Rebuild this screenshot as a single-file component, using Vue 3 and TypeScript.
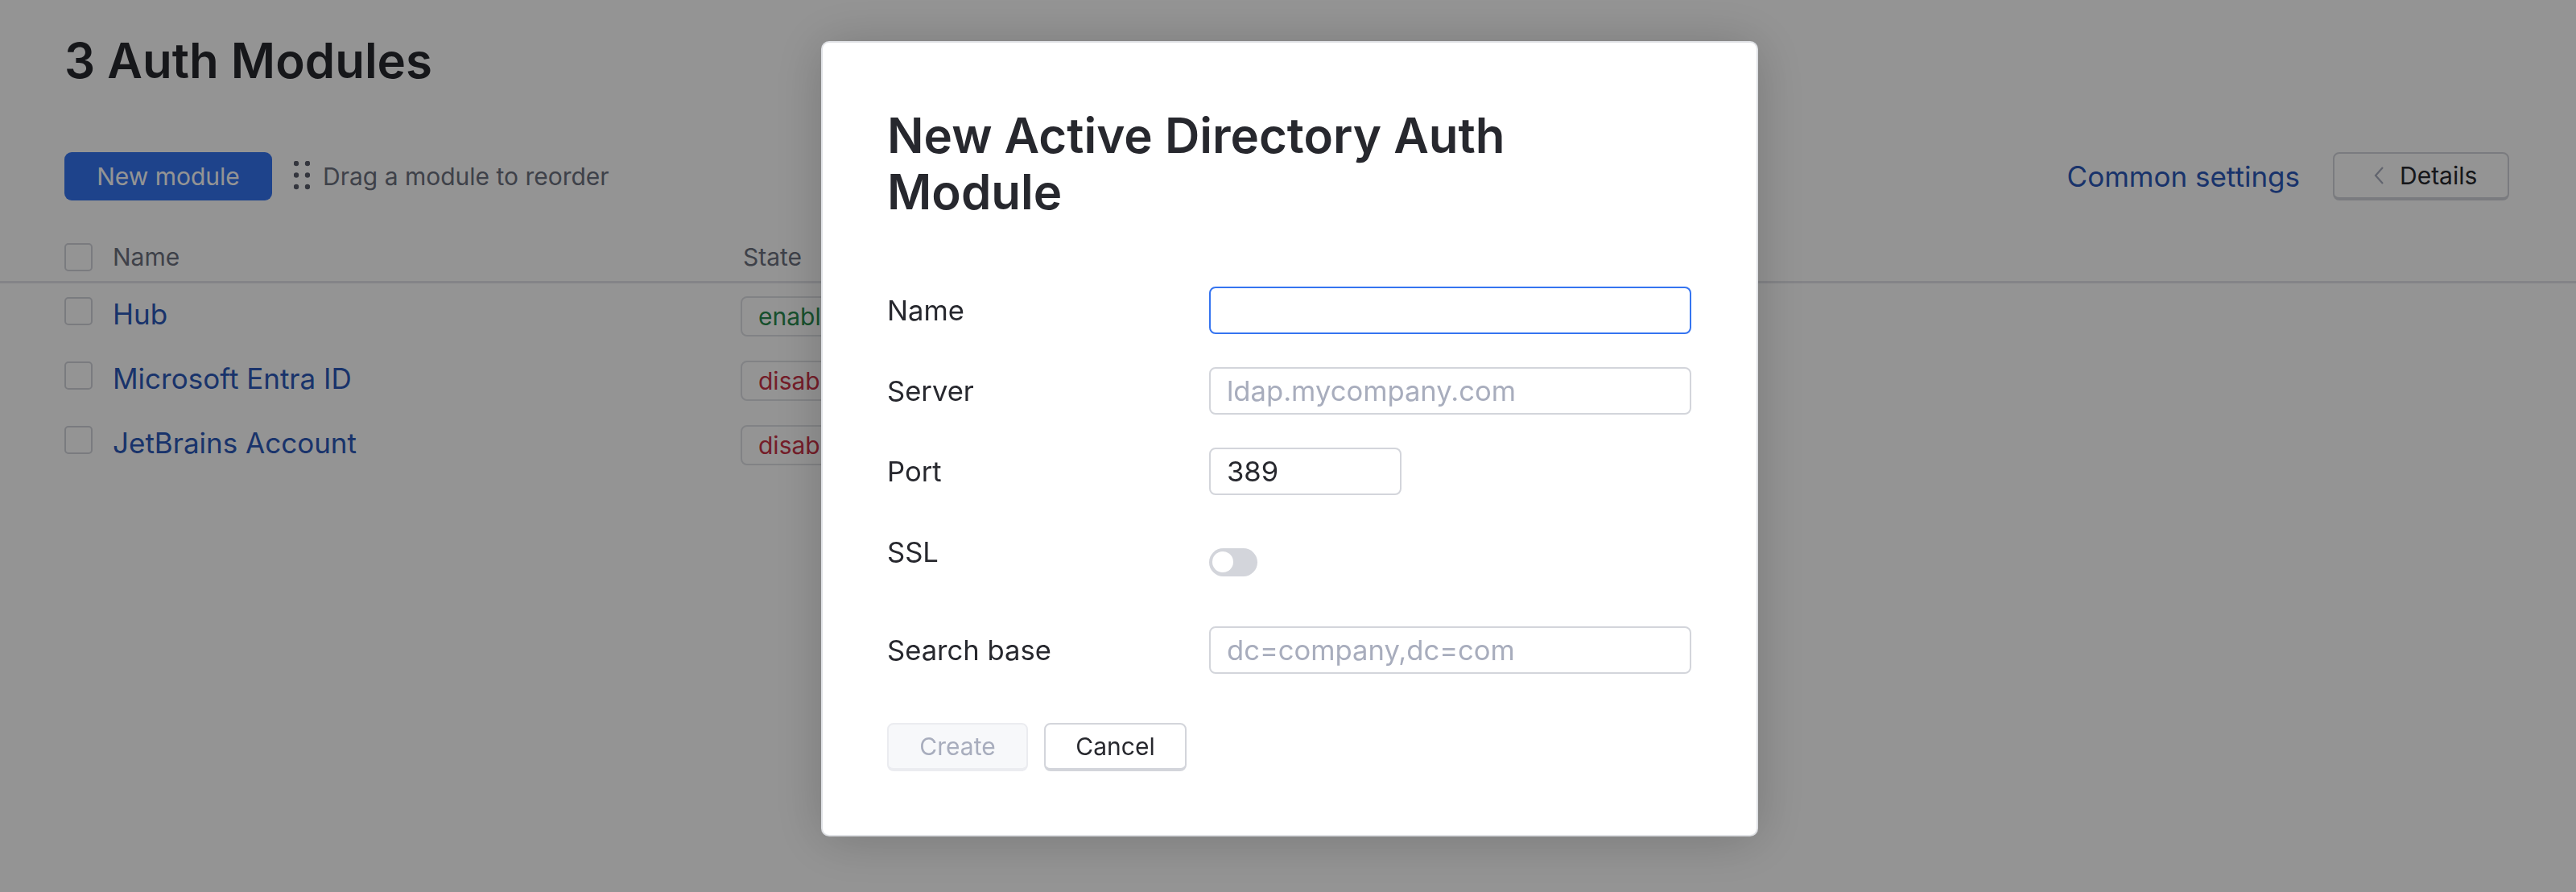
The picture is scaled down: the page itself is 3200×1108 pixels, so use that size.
<script setup lang="ts">
interface Row { name: string; state: string; on: boolean }
const rows: Row[] = [
  { name: 'Hub', state: 'enabled', on: true },
  { name: 'Microsoft Entra ID', state: 'disabled', on: false },
  { name: 'JetBrains Account', state: 'disabled', on: false },
]
</script>

<template>
  <div class="page">
    <h1 class="title">3 Auth Modules</h1>
    <div class="toolbar">
      <button class="primary">New module</button>
      <svg class="grip" width="20" height="38" viewBox="0 0 20 38" fill="currentColor">
        <circle cx="3" cy="3" r="3.2" /><circle cx="17" cy="3" r="3.2" />
        <circle cx="3" cy="17.5" r="3.2" /><circle cx="17" cy="17.5" r="3.2" />
        <circle cx="3" cy="32" r="3.2" /><circle cx="17" cy="32" r="3.2" />
      </svg>
      <span class="hint">Drag a module to reorder</span>
      <span class="spacer"></span>
      <a class="link common">Common settings</a>
      <button class="details">
        <svg width="14" height="22" viewBox="0 0 14 22" fill="none" stroke="#a8adbd" stroke-width="2.2"><path d="M12 1 3 11l9 10" /></svg>
        <span>Details</span>
      </button>
    </div>
    <div class="thead">
      <span class="check"></span>
      <span class="th name-col">Name</span>
      <span class="th">State</span>
    </div>
    <div v-for="r in rows" :key="r.name" class="row">
      <span class="check"></span>
      <a class="link name-col">{{ r.name }}</a>
      <span class="tag" :class="r.on ? 'tag-on' : 'tag-off'">{{ r.state }}</span>
    </div>
  </div>

  <div class="overlay">
    <div class="dialog">
      <h2 class="dialog-title">New Active Directory Auth Module</h2>
      <div class="field">
        <label>Name</label>
        <div class="input focused"></div>
      </div>
      <div class="field">
        <label>Server</label>
        <div class="input placeholder">ldap.mycompany.com</div>
      </div>
      <div class="field">
        <label>Port</label>
        <div class="input short">389</div>
      </div>
      <div class="field ssl">
        <label>SSL</label>
        <span class="toggle"><span class="knob"></span></span>
      </div>
      <div class="field">
        <label>Search base</label>
        <div class="input placeholder">dc=company,dc=com</div>
      </div>
      <div class="actions">
        <button class="btn disabled">Create</button>
        <button class="btn cancel">Cancel</button>
      </div>
    </div>
  </div>
</template>

<style>
html, body { margin: 0; background: #fff; }
</style>

<style scoped>
.page {
  height: 1108px;
  box-sizing: border-box;
  padding-top: 41px;
  font-family: Inter, "Liberation Sans", sans-serif;
  color: #27282e;
  font-size: 30px;
  overflow: hidden;
}
.title {
  margin: 0 0 0 80px;
  font-size: 60px;
  line-height: 68px;
  font-weight: 600;
}
.toolbar {
  display: flex;
  align-items: center;
  margin: 80px 83px 0 80px;
  height: 60px;
}
.primary {
  width: 258px;
  height: 60px;
  border: 0;
  border-radius: 9px;
  background: #3574f0;
  color: #fff;
  font: inherit;
}
.grip { color: #5a5d6b; margin-left: 27px; }
.hint { color: #6c707e; margin-left: 16px; }
.spacer { flex: 1; }
.common { margin-right: 41px; font-size: 35px; }
.link { color: #2c59b8; }
.details {
  display: flex;
  align-items: center;
  gap: 19px;
  box-sizing: border-box;
  width: 219px;
  height: 60px;
  padding: 0 0 0 48px;
  border: 2px solid #d3d5db;
  border-bottom-width: 4px;
  border-radius: 8px;
  background: #fff;
  color: #27282e;
  font: inherit;
}
.thead {
  display: flex;
  align-items: center;
  height: 60px;
  margin-top: 40px;
  padding-left: 80px;
  border-bottom: 3px solid #e3e4ea;
}
.th { color: #6c707e; }
.name-col { width: 783px; margin-left: 25px; }
.check {
  flex: none;
  box-sizing: border-box;
  width: 35px;
  height: 35px;
  border: 2px solid #d3d5db;
  border-radius: 5px;
  background: #fff;
}
.row {
  display: flex;
  align-items: flex-start;
  height: 80px;
  padding-left: 80px;
  box-sizing: border-box;
  padding-top: 17px;
  font-size: 35px;
  line-height: 42px;
}
.tag {
  box-sizing: border-box;
  height: 50px;
  margin: -1px 0 0 -3px;
  padding: 0 20px;
  border: 2px solid #dfe1e5;
  border-radius: 8px;
  font-size: 30px;
  line-height: 46px;
}
.tag-on { color: #288a4e; }
.tag-off { color: #c93347; }
.overlay {
  position: fixed;
  inset: 0;
  background: rgba(0, 0, 0, 0.42);
  font-family: Inter, "Liberation Sans", sans-serif;
}
.dialog {
  box-sizing: border-box;
  width: 1164px;
  height: 988px;
  margin: 51px 0 0 1020px;
  padding: 80px;
  background: #fff;
  border: 2px solid #dfe1e5;
  border-radius: 10px;
  box-shadow: 0 4px 64px rgba(0, 0, 0, 0.2);
  color: #27282e;
  font-size: 34.6px;
}
.dialog-title {
  margin: 0;
  width: 860px;
  font-size: 60px;
  line-height: 70px;
  font-weight: 600;
}
.field {
  display: grid;
  grid-template-columns: 400px 599px;
  align-items: center;
  height: 59px;
  margin-bottom: 41px;
}
.field label { line-height: 59px; }
.dialog-title + .field { margin-top: 83px; }
.input {
  box-sizing: border-box;
  height: 59px;
  padding: 0 20px;
  border: 2px solid #d3d5db;
  border-radius: 8px;
  line-height: 55px;
}
.focused { border-color: #3574f0; }
.placeholder { color: #a8adbd; }
.short { width: 239px; }
.ssl { height: 81px; }
.ssl label { align-self: start; }
.toggle {
  position: relative;
  display: block;
  align-self: start;
  margin-top: 25px;
  width: 60px;
  height: 35px;
  border-radius: 18px;
  background: #d3d5db;
}
.knob {
  position: absolute;
  left: 4px;
  top: 4px;
  width: 26px;
  height: 26px;
  border-radius: 50%;
  background: #fff;
}
.actions { display: flex; gap: 20px; margin-top: 61px; }
.btn {
  box-sizing: border-box;
  width: 175px;
  height: 60px;
  border: 2px solid #d3d5db;
  border-bottom-width: 4px;
  border-radius: 8px;
  background: #fff;
  color: #27282e;
  font: inherit;
  font-size: 30px;
}
.btn.cancel { width: 177px; }
.btn.disabled {
  background: #f7f8fa;
  border-color: #ebecf0;
  color: #a8adbd;
}
</style>
